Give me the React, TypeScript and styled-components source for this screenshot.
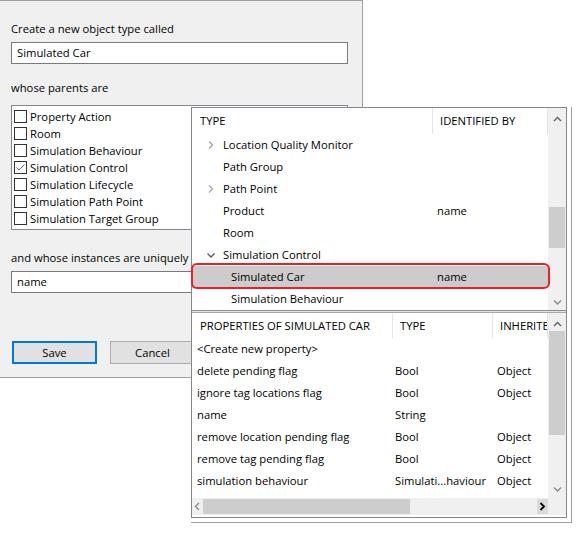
import React from "react";
import styled, { createGlobalStyle } from "styled-components";

const GlobalStyle = createGlobalStyle`
  html, body {
    margin: 0;
    padding: 0;
    background: #ffffff;
  }
  body {
    font-family: "Open Sans", "Noto Sans", sans-serif;
    font-size: 11.25px;
    color: #000000;
  }
  * {
    box-sizing: border-box;
  }
`;

const Stage = styled.div`
  position: relative;
  width: 585px;
  height: 534px;
  overflow: hidden;
  background: #ffffff;
`;

/* ---------- left dialog ---------- */

const Dialog = styled.div`
  width: 363px;
  height: 378px;
  background: #f0f0f0;
  border-top: 1px solid #a0a0a0;
  border-right: 1px solid #a0a0a0;
  border-bottom: 1px solid #a0a0a0;
  padding: 20px 0 0 11px;
  display: flex;
  flex-direction: column;
`;

const Label = styled.div<{ $gap?: number }>`
  height: 16px;
  line-height: 16px;
  margin-top: ${(p) => p.$gap ?? 0}px;
  white-space: nowrap;
`;

const TextBox = styled.div`
  width: 337px;
  height: 22px;
  margin-top: 5px;
  background: #ffffff;
  border: 1px solid #7a7a7a;
  padding-left: 5px;
  line-height: 20px;
`;

const CheckList = styled.div`
  width: 337px;
  height: 125px;
  margin-top: 9px;
  background: #ffffff;
  border: 1px solid #828790;
  padding: 2px 0 0 2px;
  overflow: hidden;
`;

const CheckRow = styled.div`
  height: 17px;
  display: flex;
  align-items: center;
  gap: 3px;
  white-space: nowrap;
`;

const Box = styled.span`
  width: 13px;
  height: 13px;
  flex: none;
  border: 1px solid #333333;
  background: #ffffff;
  display: flex;
  align-items: center;
  justify-content: center;
`;

const ButtonRow = styled.div`
  margin-top: 48px;
  margin-left: 1px;
  display: flex;
  gap: 13px;
`;

const Button = styled.div<{ $default?: boolean }>`
  width: 85px;
  height: 23px;
  background: #e1e1e1;
  border: ${(p) => (p.$default ? "2px solid #0078d7" : "1px solid #adadad")};
  display: flex;
  align-items: center;
  justify-content: center;
  padding-bottom: 1px;
`;

/* ---------- overlay window ---------- */

const Window = styled.div`
  position: absolute;
  left: 191px;
  top: 107px;
  padding: 0 4px 4px 0;
  border-right: 1px solid #a0a0a0;
  border-bottom: 1px solid #a0a0a0;
  background: #ffffff;
`;

const Frame = styled.div`
  width: 376px;
  height: 411px;
  border: 1px solid #828790;
  background: #f0f0f0;
  display: flex;
  flex-direction: column;
`;

const TreePanel = styled.div`
  height: 202px;
  display: flex;
  background: #ffffff;
`;

const Splitter = styled.div`
  height: 3px;
  background: #e3e3e3;
  border-top: 1px solid #8c8c8c;
  border-bottom: 1px solid #a8a8a8;
`;

const PropsPanel = styled.div`
  height: 204px;
  display: flex;
  flex-direction: column;
  background: #ffffff;
  padding-bottom: 2px;
`;

const PropsBody = styled.div`
  flex: 1;
  display: flex;
  min-height: 0;
`;

const Content = styled.div`
  width: 356px;
  flex: none;
  display: flex;
  flex-direction: column;
`;

const ClipContent = styled(Content)`
  overflow: hidden;
`;

const HeaderRow = styled.div<{ $cols: string; $height: number }>`
  height: ${(p) => p.$height}px;
  flex: none;
  display: grid;
  grid-template-columns: ${(p) => p.$cols};
  background: #ffffff;
`;

const HeaderCell = styled.div<{ $pad: number }>`
  padding-left: ${(p) => p.$pad}px;
  padding-bottom: 1px;
  display: flex;
  align-items: center;
  border-right: 1px solid #e5e5e5;
  white-space: nowrap;
  overflow: hidden;
  text-transform: uppercase;
`;

const DataRow = styled.div<{ $cols: string; $selected?: boolean }>`
  position: relative;
  height: 22px;
  flex: none;
  display: grid;
  grid-template-columns: ${(p) => p.$cols};
  background: ${(p) => (p.$selected ? "#cccccc" : "#ffffff")};

  ${(p) =>
    p.$selected &&
    `
    &::after {
      content: "";
      position: absolute;
      top: -3px;
      bottom: -1px;
      left: -1px;
      right: -2px;
      border: 2.5px solid #ee1c24;
      border-radius: 6px;
      z-index: 2;
    }
  `}
`;

const Cell = styled.div<{ $pad: number }>`
  padding-left: ${(p) => p.$pad}px;
  padding-bottom: 1px;
  display: flex;
  align-items: center;
  white-space: nowrap;
  overflow: hidden;
`;

const ToggleSlot = styled.span`
  width: 16px;
  height: 16px;
  margin-right: 4px;
  flex: none;
  display: flex;
  align-items: center;
  justify-content: center;
`;

/* ---------- scrollbars ---------- */

const VScroll = styled.div`
  width: 18px;
  flex: none;
  background: #f0f0f0;
  display: flex;
  flex-direction: column;
  padding: 0 1px;
`;

const VArrow = styled.div<{ $pad: string }>`
  height: 17px;
  flex: none;
  display: flex;
  justify-content: center;
  padding: ${(p) => p.$pad};
`;

const Gap = styled.div<{ $size?: number }>`
  flex: ${(p) => (p.$size === undefined ? "1" : "none")};
  height: ${(p) => (p.$size === undefined ? "auto" : `${p.$size}px`)};
`;

const VThumb = styled.div<{ $size: number }>`
  height: ${(p) => p.$size}px;
  flex: none;
  background: #cdcdcd;
`;

const HScrollRow = styled.div`
  height: 17px;
  flex: none;
  display: flex;
`;

const HScroll = styled.div`
  width: 356px;
  flex: none;
  background: #f0f0f0;
  display: flex;
  align-items: stretch;
`;

const HArrow = styled.div<{ $hot?: boolean }>`
  width: 11px;
  flex: none;
  display: flex;
  align-items: center;
  justify-content: center;
  background: ${(p) => (p.$hot ? "#dadada" : "transparent")};
  margin: 1px 0;
`;

const HThumb = styled.div<{ $size: number }>`
  width: ${(p) => p.$size}px;
  margin: 1px 0;
  background: #cdcdcd;
`;

const Corner = styled.div`
  flex: 1;
  background: #f0f0f0;
`;

type Dir = "up" | "down" | "left" | "right";

const arrowPoints: Record<Dir, string> = {
  up: "1,5 4.5,1.5 8,5",
  down: "1,1.5 4.5,5 8,1.5",
  left: "5,1 1.5,4.5 5,8",
  right: "1.5,1 5,4.5 1.5,8",
};

function Arrow({ dir, color = "#606060", weight = 1.4 }: { dir: Dir; color?: string; weight?: number }) {
  const vertical = dir === "up" || dir === "down";
  const w = vertical ? 9 : 7;
  const h = vertical ? 7 : 9;
  return (
    <svg width={w} height={h} viewBox={`0 0 ${w} ${h}`}>
      <polyline points={arrowPoints[dir]} fill="none" stroke={color} strokeWidth={weight} />
    </svg>
  );
}

function Toggle({ state }: { state?: "open" | "closed" }) {
  if (!state) return <ToggleSlot />;
  return (
    <ToggleSlot>
      {state === "closed" ? (
        <svg width="16" height="16" viewBox="0 0 16 16">
          <polyline points="6,4.5 9.5,8 6,11.5" fill="none" stroke="#a6a6a6" strokeWidth="1.3" />
        </svg>
      ) : (
        <svg width="16" height="16" viewBox="0 0 16 16">
          <polyline points="4.5,6.5 8,10 11.5,6.5" fill="none" stroke="#555555" strokeWidth="1.3" />
        </svg>
      )}
    </ToggleSlot>
  );
}

function CheckMark() {
  return (
    <svg width="11" height="11" viewBox="0 0 11 11">
      <polyline points="1.5,5.5 4,8 9.5,2.5" fill="none" stroke="#6b6b6b" strokeWidth="1" />
    </svg>
  );
}

const parents = [
  { label: "Property Action", checked: false },
  { label: "Room", checked: false },
  { label: "Simulation Behaviour", checked: false },
  { label: "Simulation Control", checked: true },
  { label: "Simulation Lifecycle", checked: false },
  { label: "Simulation Path Point", checked: false },
  { label: "Simulation Target Group", checked: false },
  { label: "Stage", checked: false },
];

type TreeItem = {
  label: string;
  level: number;
  toggle?: "open" | "closed";
  id?: string;
  selected?: boolean;
};

const treeItems: TreeItem[] = [
  { label: "Location Quality Monitor", level: 0, toggle: "closed" },
  { label: "Path Group", level: 0 },
  { label: "Path Point", level: 0, toggle: "closed" },
  { label: "Product", level: 0, id: "name" },
  { label: "Room", level: 0 },
  { label: "Simulation Control", level: 0, toggle: "open" },
  { label: "Simulated Car", level: 1, id: "name", selected: true },
  { label: "Simulation Behaviour", level: 1 },
];

const properties = [
  { name: "<Create new property>", type: "", from: "" },
  { name: "delete pending flag", type: "Bool", from: "Object" },
  { name: "ignore tag locations flag", type: "Bool", from: "Object" },
  { name: "name", type: "String", from: "" },
  { name: "remove location pending flag", type: "Bool", from: "Object" },
  { name: "remove tag pending flag", type: "Bool", from: "Object" },
  { name: "simulation behaviour", type: "Simulati...haviour", from: "Object" },
];

const TREE_COLS = "241px 1fr";
const PROP_COLS = "201px 100px 1fr";

export default function App() {
  return (
    <Stage>
      <GlobalStyle />
      <Dialog>
        <Label>Create a new object type called</Label>
        <TextBox>Simulated Car</TextBox>
        <Label $gap={16}>whose parents are</Label>
        <CheckList>
          {parents.map((p) => (
            <CheckRow key={p.label}>
              <Box>{p.checked && <CheckMark />}</Box>
              {p.label}
            </CheckRow>
          ))}
        </CheckList>
        <Label $gap={20}>and whose instances are uniquely identified by</Label>
        <TextBox>name</TextBox>
        <ButtonRow>
          <Button $default>Save</Button>
          <Button>Cancel</Button>
        </ButtonRow>
      </Dialog>

      <Window>
        <Frame>
          <TreePanel>
            <Content>
              <HeaderRow $cols={TREE_COLS} $height={26}>
                <HeaderCell $pad={8}>Type</HeaderCell>
                <HeaderCell $pad={7}>Identified by</HeaderCell>
              </HeaderRow>
              {treeItems.map((t) => (
                <DataRow key={t.label} $cols={TREE_COLS} $selected={t.selected}>
                  <Cell $pad={11 + t.level * 8}>
                    <Toggle state={t.toggle} />
                    {t.label}
                  </Cell>
                  <Cell $pad={4}>{t.id}</Cell>
                </DataRow>
              ))}
            </Content>
            <VScroll>
              <VArrow $pad="8px 0 0">
                <Arrow dir="up" />
              </VArrow>
              <Gap $size={82} />
              <VThumb $size={41} />
              <Gap />
              <VArrow $pad="6px 0 0">
                <Arrow dir="down" color="#8a8a8a" />
              </VArrow>
            </VScroll>
          </TreePanel>

          <Splitter />

          <PropsPanel>
            <PropsBody>
              <ClipContent>
                <HeaderRow $cols={PROP_COLS} $height={25}>
                  <HeaderCell $pad={8}>Properties of Simulated Car</HeaderCell>
                  <HeaderCell $pad={7}>Type</HeaderCell>
                  <HeaderCell $pad={7}>Inherited from</HeaderCell>
                </HeaderRow>
                {properties.map((p) => (
                  <DataRow key={p.name} $cols={PROP_COLS}>
                    <Cell $pad={5}>{p.name}</Cell>
                    <Cell $pad={2}>{p.type}</Cell>
                    <Cell $pad={4}>{p.from}</Cell>
                  </DataRow>
                ))}
              </ClipContent>
              <VScroll>
                <VArrow $pad="8px 0 0">
                  <Arrow dir="up" />
                </VArrow>
                <Gap $size={1} />
                <VThumb $size={104} />
                <Gap />
                <VArrow $pad="5px 0 0">
                  <Arrow dir="down" color="#8a8a8a" />
                </VArrow>
              </VScroll>
            </PropsBody>
            <HScrollRow>
              <HScroll>
                <HArrow>
                  <Arrow dir="left" color="#8a8a8a" />
                </HArrow>
                <HThumb $size={207} />
                <Gap />
                <HArrow $hot>
                  <Arrow dir="right" color="#000000" weight={1.8} />
                </HArrow>
              </HScroll>
              <Corner />
            </HScrollRow>
          </PropsPanel>
        </Frame>
      </Window>
    </Stage>
  );
}
